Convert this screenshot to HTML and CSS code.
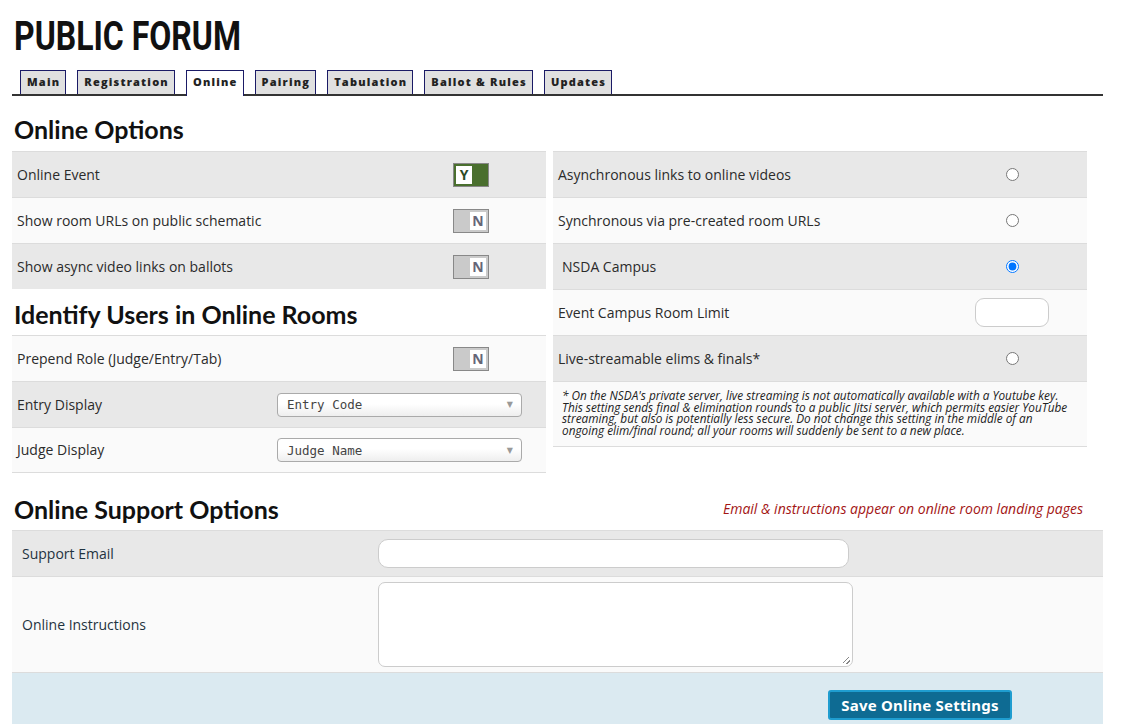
FILE: index.html
```html
<!DOCTYPE html>
<html>
<head>
<meta charset="utf-8">
<link rel="stylesheet" href="styles.css">
</head>
<body>
<div class="page">
  <h1 class="title"><span class="title-text">PUBLIC FORUM</span></h1>
  <ul class="tabs">
    <li class="tab">Main</li>
    <li class="tab">Registration</li>
    <li class="tab active">Online</li>
    <li class="tab">Pairing</li>
    <li class="tab">Tabulation</li>
    <li class="tab">Ballot &amp; Rules</li>
    <li class="tab">Updates</li>
  </ul>

  <div class="cols">
    <div class="col">
      <h2 class="heading first">Online Options</h2>
      <div class="row dark">
        <span class="label">Online Event</span>
        <span class="ctrl"><span class="toggle on"><span class="knob">Y</span></span></span>
      </div>
      <div class="row light">
        <span class="label">Show room URLs on public schematic</span>
        <span class="ctrl"><span class="toggle off"><span class="knob">N</span></span></span>
      </div>
      <div class="row dark">
        <span class="label">Show async video links on ballots</span>
        <span class="ctrl"><span class="toggle off"><span class="knob">N</span></span></span>
      </div>
      <h2 class="heading second">Identify Users in Online Rooms</h2>
      <div class="row light">
        <span class="label">Prepend Role (Judge/Entry/Tab)</span>
        <span class="ctrl"><span class="toggle off"><span class="knob">N</span></span></span>
      </div>
      <div class="row dark">
        <span class="label">Entry Display</span>
        <span class="sel-cell"><span class="select">Entry Code<span class="arrow">▼</span></span></span>
      </div>
      <div class="row light last">
        <span class="label">Judge Display</span>
        <span class="sel-cell"><span class="select">Judge Name<span class="arrow">▼</span></span></span>
      </div>
    </div>

    <div class="col right">
      <div class="row dark">
        <span class="label">Asynchronous links to online videos</span>
        <span class="ctrl"><input type="radio" name="mode" class="radio"></span>
      </div>
      <div class="row light">
        <span class="label">Synchronous via pre-created room URLs</span>
        <span class="ctrl"><input type="radio" name="mode" class="radio"></span>
      </div>
      <div class="row dark">
        <span class="label indent">NSDA Campus</span>
        <span class="ctrl"><input type="radio" name="mode" class="radio" checked></span>
      </div>
      <div class="row light">
        <span class="label">Event Campus Room Limit</span>
        <span class="ctrl"><span class="num-input"></span></span>
      </div>
      <div class="row dark">
        <span class="label">Live-streamable elims &amp; finals*</span>
        <span class="ctrl"><input type="radio" name="live" class="radio"></span>
      </div>
      <p class="note">* On the NSDA's private server, live streaming is not automatically available with a Youtube key. This setting sends final &amp; elimination rounds to a public Jitsi server, which permits easier YouTube streaming, but also is potentially less secure. Do not change this setting in the middle of an ongoing elim/final round; all your rooms will suddenly be sent to a new place.</p>
    </div>
  </div>

  <div class="support-head">
    <h2 class="heading third">Online Support Options</h2>
    <span class="hint">Email &amp; instructions appear on online room landing pages</span>
  </div>
  <div class="support">
    <div class="srow dark">
      <span class="slabel">Support Email</span>
      <span class="email-input"></span>
    </div>
    <div class="srow light tall">
      <span class="slabel">Online Instructions</span>
      <span class="textarea"><span class="grip"></span></span>
    </div>
    <div class="footer">
      <span class="btn">Save Online Settings</span>
    </div>
  </div>
</div>
</body>
</html>
```

FILE: styles.css
```css
* { box-sizing: border-box; }
html, body { margin: 0; padding: 0; background: #fff; }
body { font-family: "Open Sans", "Noto Sans", sans-serif; color: #2b2b2b; }

.page { padding: 0 18px 0 12px; width: 1121px; }

.title {
  margin: 0;
  padding: 14px 0 0 2px;
  height: 70px;
  font-family: Roboto, "Liberation Sans", sans-serif;
  font-size: 40px;
  line-height: 46px;
  font-weight: 700;
  color: #111;
  white-space: nowrap;
}
.title-text {
  display: inline-block;
  transform: scaleX(0.8);
  transform-origin: left center;
}

.tabs {
  list-style: none;
  margin: 0;
  padding: 0 0 0 8px;
  display: flex;
  gap: 11px;
  height: 26px;
  border-bottom: 2px solid #333;
  align-items: flex-end;
}
.tab {
  height: 24px;
  padding: 0 5px 0 6px;
  background: #e0e0e0;
  border: 1px solid #1b1b66;
  border-bottom: none;
  font-size: 11px;
  font-weight: 800;
  letter-spacing: 1.2px;
  line-height: 22px;
  color: #222;
}
.tab.active {
  background: #fff;
  height: 26px;
  margin-bottom: -2px;
}

.cols { display: flex; gap: 7px; width: 1075px; }
.col { width: 534px; }
.col.right { padding-top: 55px; }

.heading {
  margin: 0;
  font-family: Lato, "Open Sans", sans-serif;
  font-weight: 700;
  font-size: 25px;
  line-height: 30px;
  color: #111;
  padding-left: 2px;
}
.heading.first { height: 55px; padding-top: 18px; }
.heading.second { height: 46px; padding-top: 10px; }

.row {
  height: 46px;
  display: flex;
  align-items: center;
  border-top: 1px solid #dcdcdc;
}
.row.last { border-bottom: 1px solid #dcdcdc; }
.dark { background: #e8e8e8; }
.light { background: #fafafa; }
.label { flex: 1; padding-left: 5px; padding-bottom: 1px; font-size: 14px; color: #2b2b2b; }
.label.indent { padding-left: 9px; }
.ctrl { width: 150px; display: flex; justify-content: center; align-items: center; }

.toggle {
  width: 36px;
  height: 24px;
  border: 1px solid #888;
  display: flex;
  align-items: center;
  padding: 0 2px;
}
.toggle.on { background: #4a6f2e; justify-content: flex-start; }
.toggle.off { background: #cacaca; justify-content: flex-end; }
.knob {
  width: 16px;
  height: 18px;
  background: #fff;
  font-size: 14px;
  font-weight: 700;
  line-height: 18px;
  text-align: center;
}
.toggle.on .knob { color: #2d4a26; }
.toggle.off .knob { color: #667; }

.radio { width: 13px; height: 13px; margin: 0; }

.sel-cell { width: 269px; }
.select {
  display: flex;
  align-items: center;
  justify-content: space-between;
  width: 245px;
  height: 24px;
  padding: 0 8px 0 9px;
  border: 1px solid #aaa;
  border-radius: 4px;
  background: linear-gradient(#ffffff 0%, #ffffff 45%, #eeeeee 100%);
  font-family: "DejaVu Sans Mono", "Liberation Mono", monospace;
  font-size: 12.5px;
  color: #444;
}
.arrow { font-size: 8px; color: #999; font-family: "DejaVu Sans", sans-serif; }

.num-input {
  width: 74px;
  height: 29px;
  background: #fff;
  border: 1px solid #ccc;
  border-radius: 9px;
}

.note {
  margin: 0;
  height: 66px;
  padding: 8px 16px 0 9px;
  background: #fafafa;
  border-top: 1px solid #dcdcdc;
  border-bottom: 1px solid #dcdcdc;
  font-size: 11.8px;
  line-height: 11.5px;
  font-style: italic;
  color: #222;
}

.support-head {
  height: 57px;
  display: flex;
  align-items: flex-end;
  justify-content: space-between;
  padding-bottom: 6px;
}
.hint {
  font-style: italic;
  font-size: 14px;
  color: #a31515;
  padding-right: 20px;
  padding-bottom: 6px;
}

.support { width: 1091px; }
.srow {
  display: flex;
  align-items: center;
  height: 46px;
  border-top: 1px solid #dcdcdc;
}
.srow.tall { height: 96px; }
.slabel { width: 366px; padding-left: 10px; font-size: 14px; color: #1f3340; }
.email-input {
  width: 471px;
  height: 29px;
  background: #fff;
  border: 1px solid #ccc;
  border-radius: 10px;
}
.textarea {
  position: relative;
  width: 475px;
  height: 85px;
  background: #fff;
  border: 1px solid #ccc;
  border-radius: 7px;
}
.grip {
  position: absolute;
  right: 2px;
  bottom: 2px;
  width: 7px;
  height: 7px;
  background: linear-gradient(135deg, transparent 40%, #888 40%, #888 50%, transparent 50%, transparent 70%, #888 70%, #888 80%, transparent 80%);
}
.footer {
  height: 60px;
  background: #dbeaf1;
  border-top: 1px solid #dcdcdc;
  display: flex;
  justify-content: flex-end;
  align-items: flex-start;
  padding: 17px 91px 0 0;
}
.btn {
  width: 184px;
  height: 30px;
  background: #0e6b93;
  border: 2px solid #1f9dd0;
  border-radius: 3px;
  color: #fff;
  font-family: "Noto Sans", "Open Sans", sans-serif;
  font-weight: 700;
  font-size: 15px;
  line-height: 26px;
  text-align: center;
  letter-spacing: 0.2px;
}
```
